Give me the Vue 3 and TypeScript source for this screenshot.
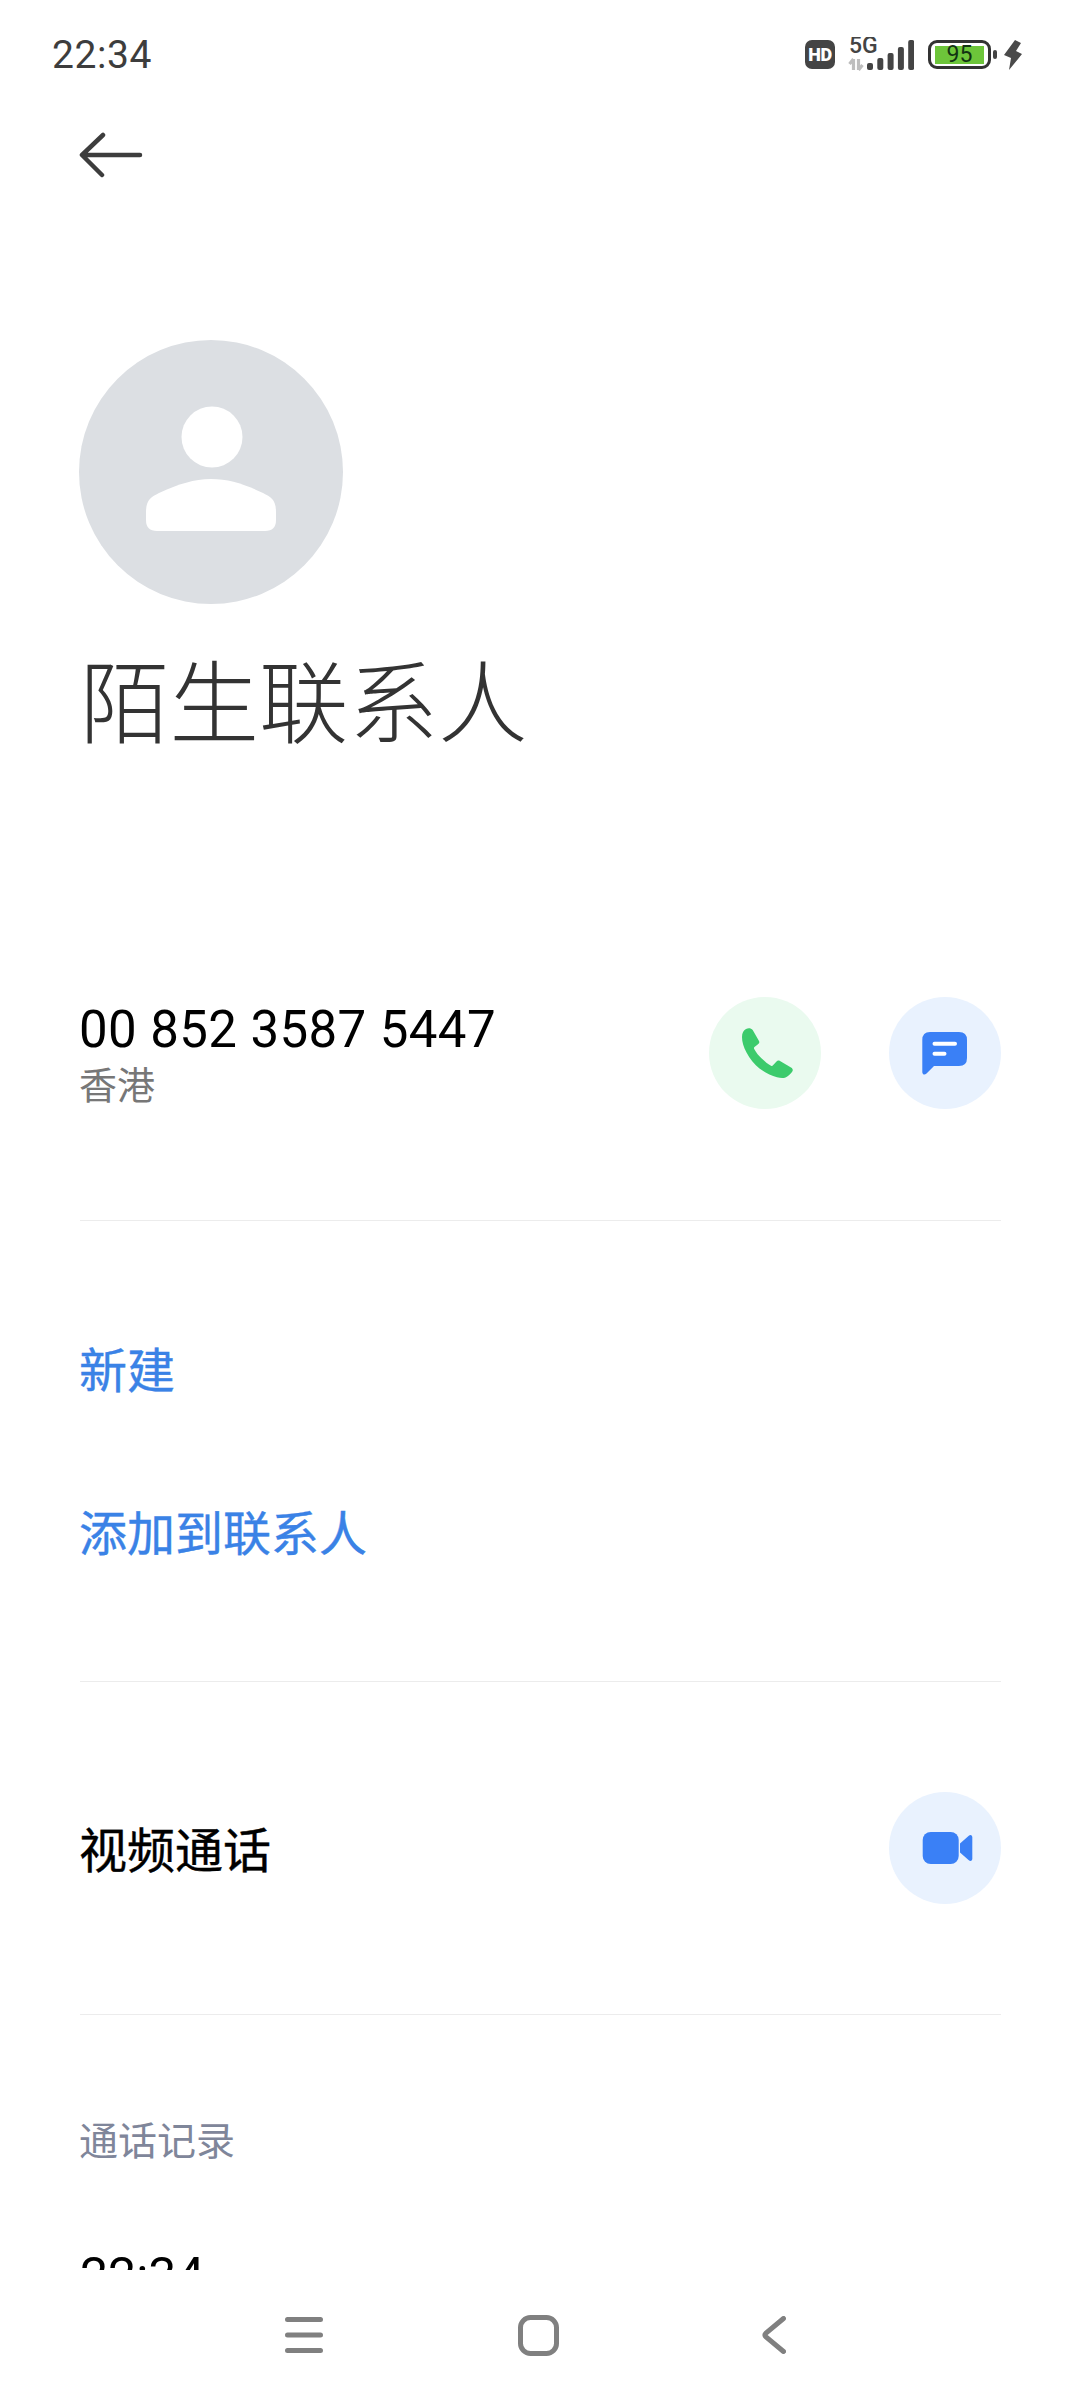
<script setup lang="ts">
const bars: number[][] = [
  [0, 7],
  [10.3, 12],
  [20.6, 17],
  [30.9, 23],
  [41.2, 30],
]
</script>

<template>
  <div class="page">
    <header class="status">
      <span class="time">22:34</span>
      <div class="status-icons">
        <span class="hd">HD</span>
        <svg class="signal" width="66" height="36" viewBox="0 0 66 36">
          <text x="1" y="16" class="five-g">5G</text>
          <path d="M5.500 22v11M5.500 22l-4 5M10.500 33V22M10.500 33l4-5" fill="none" stroke="#bdbdbd" stroke-width="3.200" />
          <rect v-for="b in bars" :key="b[0]" :x="19 + b[0]" :y="33 - b[1]" width="6" :height="b[1]" rx="2" fill="#444" />
        </svg>
        <div class="battery">
          <div class="battery-body"><span class="battery-fill">95</span></div>
          <span class="battery-tip"></span>
        </div>
        <svg class="bolt" width="18" height="30" viewBox="0 0 18 30">
          <path d="M11 0 17 3 12 11 18 14 5 30 7 18 0 15Z" fill="#4a4a4a" />
        </svg>
      </div>
    </header>

    <div class="toolbar">
      <svg width="66" height="46" viewBox="0 0 66 46">
        <path d="M61 23H4M24 3 3 23l20 20" fill="none" stroke="#3d3d3d" stroke-width="4.500" stroke-linecap="round" stroke-linejoin="round" />
      </svg>
    </div>

    <main class="scroll">
      <div class="avatar">
        <svg width="264" height="264" viewBox="0 0 264 264">
          <circle cx="132" cy="132" r="132" fill="#dcdfe3" />
          <circle cx="133" cy="97" r="30.500" fill="#fff" />
          <path d="M67 172C67 160 72 157 80 153 100 144 115 139 132 139 150 139 165 144 184 153 192 157 197 160 197 172V180Q197 191 186 191H78Q67 191 67 180Z" fill="#fff" />
        </svg>
      </div>
      <h1 class="title">陌生联系人</h1>

      <section class="row phone-row">
        <div class="phone-info">
          <div class="number">00 852 3587 5447</div>
          <div class="region">香港</div>
        </div>
        <div class="buttons">
          <div class="circle green">
            <svg width="112" height="112" viewBox="0 0 112 112">
              <path d="M37 32C39.500 30.500 42 31 43.700 33L50 44C50.700 45.500 50.300 46.500 49 47.300L45.500 50C44.800 50.600 44.800 51.300 45.200 52 47.500 56 49.500 58.500 52.700 61.500 56 64.700 58.500 66.800 62 68.700 62.800 69 63.500 69 64 68.300L67.500 64.500C68.500 63.500 69.500 63.300 71 64L82 70.500C84 71.700 84.300 73.500 83 75 81 77.500 79 79.500 76.500 80.500 74 81.500 71 81 68 80.300 62 78.500 56 75.500 50.500 71.500 45.500 67.500 41 62 37.500 55.500 34.500 50 33 45 33 40 33 36 34.500 33.500 37 32Z" fill="#3ccb6c" />
            </svg>
          </div>
          <div class="circle blue">
            <svg width="112" height="112" viewBox="0 0 112 112">
              <path d="M41 35H70Q78 35 78 43V61Q78 69 70 69H45L37.500 76.500C35.500 78.500 33.300 77.500 33.300 75V43Q33.300 35 41 35Z" fill="#3a80f6" />
              <path d="M45.500 46.700H66M45.500 56.700H55.500" stroke="#fff" stroke-width="4" stroke-linecap="round" fill="none" />
            </svg>
          </div>
        </div>
      </section>

      <hr class="divider first" />

      <div class="action new">新建</div>
      <div class="action add">添加到联系人</div>

      <hr class="divider second" />

      <section class="row video-row">
        <span class="video-label">视频通话</span>
        <div class="circle blue">
          <svg width="112" height="112" viewBox="0 0 112 112">
            <rect x="33.700" y="40" width="36" height="32" rx="8" fill="#3a80f6" />
            <path d="M71 51.500 79.500 44C81.500 42.300 83.300 43.200 83.300 45.500V66.500C83.300 68.800 81.500 69.700 79.500 68L71 60.500Z" fill="#3a80f6" />
          </svg>
        </div>
      </section>

      <hr class="divider third" />

      <div class="records">通话记录</div>
      <div class="record-time">22:34</div>
    </main>

    <nav class="nav">
      <svg width="38" height="36" viewBox="0 0 38 36">
        <path d="M2.500 2.500H35.500M2.500 18H35.500M2.500 33.500H35.500" stroke="#808080" stroke-width="5" stroke-linecap="round" />
      </svg>
      <svg class="nav-home" width="41" height="41" viewBox="0 0 41 41">
        <rect x="2.500" y="2.500" width="36" height="36" rx="10" fill="none" stroke="#808080" stroke-width="5" />
      </svg>
      <svg width="24" height="38" viewBox="0 0 24 38">
        <path d="M21.500 2.500 4 17Q2 19 4 21L21.500 35.500" fill="none" stroke="#808080" stroke-width="5" stroke-linecap="round" />
      </svg>
    </nav>
  </div>
</template>

<style>
html,
body {
  margin: 0;
  background: #fff;
}
</style>

<style scoped>
.page {
  width: 1080px;
  height: 2400px;
  display: flex;
  flex-direction: column;
  overflow: hidden;
  background: #fff;
  font-family: Roboto, "Noto Sans CJK SC", sans-serif;
  color: #000;
}
.status {
  box-sizing: border-box;
  height: 108px;
  flex: none;
  display: flex;
  align-items: center;
  justify-content: space-between;
  padding: 1px 58px 0 52px;
}
.time {
  font-size: 39px;
  color: #3d3d3d;
  letter-spacing: 0.6px;
}
.status-icons {
  display: flex;
  align-items: center;
}
.hd {
  width: 30px;
  height: 29px;
  border-radius: 7px;
  background: #444;
  color: #fff;
  font-size: 18px;
  font-weight: 900;
  line-height: 29px;
  text-align: center;
  letter-spacing: -0.5px;
}
.signal {
  margin-left: 13px;
}
.five-g {
  font-family: Roboto, sans-serif;
  font-size: 23px;
  font-weight: 500;
  fill: #444;
}
.battery {
  display: flex;
  align-items: center;
  margin-left: 14px;
}
.battery-body {
  box-sizing: border-box;
  width: 63px;
  height: 29px;
  border: 3.5px solid #333;
  border-radius: 9px;
  padding: 2.5px 4px;
  display: flex;
}
.battery-fill {
  flex: 1;
  background: #6dc53a;
  color: #123312;
  font-size: 23px;
  line-height: 18px;
  text-align: center;
}
.battery-tip {
  width: 4px;
  height: 9px;
  margin-left: 2px;
  border-radius: 2px;
  background: #444;
}
.bolt {
  margin-left: 7px;
}
.toolbar {
  height: 94px;
  flex: none;
  display: flex;
  align-items: center;
  padding-left: 79px;
}
.scroll {
  flex: 1;
  min-height: 0;
  overflow: hidden;
  padding: 138px 79px 0 80px;
}
.avatar {
  height: 264px;
  margin-left: -1px;
}
.avatar svg {
  display: block;
}
.title {
  margin: 42px 0 0 0;
  font-size: 89.5px;
  font-weight: 300;
  line-height: 120px;
  color: #333;
  height: 120px;
}
.row {
  display: flex;
  align-items: center;
  justify-content: space-between;
}
.phone-row {
  margin-top: 231px;
  height: 112px;
}
.number {
  font-size: 51px;
  line-height: 60px;
  letter-spacing: 0.4px;
  margin-left: -1px;
}
.region {
  font-size: 38px;
  line-height: 48px;
  color: #777;
  margin: 2px 0 -4px -1px;
}
.buttons {
  display: flex;
  gap: 68px;
}
.circle {
  width: 112px;
  height: 112px;
  border-radius: 50%;
  flex: none;
}
.circle svg {
  display: block;
}
.green {
  background: #eafaef;
}
.blue {
  background: #e9f2fe;
}
.divider {
  margin: 0;
  border: none;
  height: 1px;
  background: #ececec;
}
.first {
  margin-top: 111px;
}
.action {
  font-size: 48px;
  line-height: 64px;
  color: #3a82e6;
  margin-left: -1px;
  -webkit-text-stroke: 0.4px #3a82e6;
}
.new {
  margin-top: 119px;
}
.add {
  margin-top: 99px;
}
.second {
  margin-top: 114px;
}
.video-row {
  margin-top: 110px;
  height: 112px;
}
.video-label {
  font-size: 48px;
  margin: 0 0 2px -1px;
  -webkit-text-stroke: 0.4px #000;
}
.third {
  margin-top: 110px;
}
.records {
  margin-top: 102px;
  font-size: 39px;
  line-height: 50px;
  color: #7f869a;
  margin-left: -1px;
}
.record-time {
  margin-top: 81px;
  font-size: 50px;
  line-height: 56px;
}
.nav {
  height: 130px;
  flex: none;
  background: #fff;
  display: flex;
  align-items: center;
  padding-left: 285px;
}
.nav-home {
  margin-left: 195px;
  margin-right: 203px;
}
</style>
